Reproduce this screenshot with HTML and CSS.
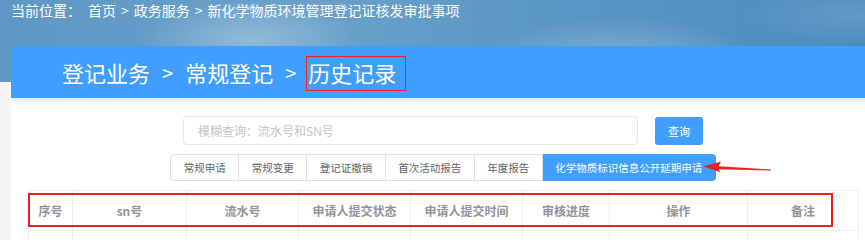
FILE: index.html
```html
<!DOCTYPE html>
<html lang="zh-CN">
<head>
<meta charset="utf-8">
<title>历史记录</title>
<link rel="stylesheet" href="styles.css">
</head>
<body>
<div class="loc"><span class="loc-label">当前位置：</span><span>首页</span><span class="gt">&gt;</span><span>政务服务</span><span class="gt">&gt;</span><span>新化学物质环境管理登记证核发审批事项</span></div>
<div class="card">
  <div class="card-head">
    <span>登记业务</span><span class="sep">&gt;</span><span>常规登记</span><span class="sep">&gt;</span><span class="mark">历史记录</span>
  </div>
  <div class="search">
    <div class="input">模糊查询：流水号和SN号</div>
    <button class="btn">查询</button>
  </div>
  <div class="tabs">
    <div class="tab">常规申请</div>
    <div class="tab">常规变更</div>
    <div class="tab">登记证撤销</div>
    <div class="tab">首次活动报告</div>
    <div class="tab">年度报告</div>
    <div class="tab active">化学物质标识信息公开延期申请</div>
  </div>
  <svg class="arrow" width="76" height="18" viewBox="0 0 76 18">
    <polygon points="3,8.5 21,3.6 18.5,8.2 71,11.6 71,12.6 18.5,11.2 20.5,14.2" fill="#f21c1c"/>
  </svg>
  <div class="table-wrap">
    <table class="grid">
      <colgroup>
        <col style="width:44px"><col style="width:114px"><col style="width:112px"><col style="width:112px">
        <col style="width:112px"><col style="width:87px"><col style="width:138px"><col style="width:111px">
      </colgroup>
      <tr class="head">
        <th>序号</th><th>sn号</th><th>流水号</th><th>申请人提交状态</th><th>申请人提交时间</th><th>审核进度</th><th>操作</th><th>备注</th>
      </tr>
      <tr class="row">
        <td></td><td></td><td></td><td></td><td></td><td></td><td></td><td></td>
      </tr>
    </table>
    <div class="hl"></div>
  </div>
</div>
</body>
</html>
```
FILE: styles.css
```css
html, body {
  margin: 0;
  padding: 0;
  overflow: hidden;
}
body {
  width: 865px;
  height: 240px;
  font-family: "Noto Sans CJK SC", "Noto Sans", sans-serif;
  background-color: #f5f5f5;
  background-image:
    radial-gradient(ellipse 110px 40px at 250px 40px, rgba(255,255,255,0.28), rgba(255,255,255,0) 100%),
    radial-gradient(ellipse 140px 45px at 620px 62px, rgba(255,255,255,0.25), rgba(255,255,255,0) 100%),
    radial-gradient(ellipse 120px 30px at 860px 15px, rgba(255,255,255,0.12), rgba(255,255,255,0) 100%),
    linear-gradient(90deg, #5e97c5 0%, #6aa1cb 35%, #5c98c6 60%, #4d8cbf 100%);
  background-size: 100% 82px, 100% 82px, 100% 82px, 100% 82px;
  background-repeat: no-repeat;
}
.loc {
  height: 46px;
  padding-left: 11px;
  color: #fff;
  font-size: 14px;
  line-height: 21px;
  white-space: nowrap;
  box-sizing: border-box;
}
.loc-label {
  margin-right: 7px;
}
.loc .gt {
  margin: 0 5px;
}
.card {
  position: relative;
  margin-left: 11px;
  width: 864px;
  height: 194px;
  overflow: hidden;
  background: #fff;
  padding: 0 17px;
  box-sizing: border-box;
}
.card-head {
  margin: 0 -17px;
  height: 52px;
  background: #409eff;
  display: flex;
  align-items: center;
  padding-left: 51px;
  color: #fff;
  font-size: 22px;
  white-space: nowrap;
  box-shadow: 0 3px 8px rgba(0,0,0,0.12);
}
.card-head .sep {
  margin: 0 12px 0 12px;
  font-size: 20px;
}
.card-head .mark {
  border: 1px solid #ff1a1a;
  height: 33px;
  line-height: 31px;
  padding: 0 9px 0 1px;
  margin-left: -2px;
  margin-top: 3px;
}
.search {
  display: flex;
  justify-content: center;
  align-items: center;
  gap: 17px;
  margin-top: 18px;
  height: 29px;
}
.input {
  width: 455px;
  height: 29px;
  box-sizing: border-box;
  border: 1px solid #e4e7ed;
  border-radius: 4px;
  padding-left: 14px;
  color: #c0c4cc;
  font-size: 12px;
  line-height: 27px;
}
.btn {
  width: 48px;
  height: 28px;
  border: none;
  border-radius: 3px;
  background: #409eff;
  color: #fff;
  font-family: inherit;
  font-size: 11px;
  padding: 0;
}
.tabs {
  display: flex;
  justify-content: center;
  margin-top: 9px;
  height: 27px;
}
.tab {
  height: 27px;
  box-sizing: border-box;
  border: 1px solid #dcdfe6;
  border-left: none;
  padding: 0 12.5px;
  font-size: 10.5px;
  line-height: 25px;
  color: #606266;
  white-space: nowrap;
}
.tab:first-child {
  border-left: 1px solid #dcdfe6;
  border-radius: 4px 0 0 4px;
}
.tab.active {
  background: #409eff;
  border-color: #409eff;
  color: #fff;
  border-radius: 0 4px 4px 0;
}
.arrow {
  position: absolute;
  left: 689px;
  top: 112px;
}
.table-wrap {
  position: relative;
  margin-top: 9px;
  width: 830px;
}
.grid {
  border-collapse: collapse;
  table-layout: fixed;
  width: 830px;
}
.grid th, .grid td {
  border: 1px solid #ebeef5;
  padding: 0;
}
.grid .head th {
  height: 39px;
  color: #909399;
  font-size: 12px;
  font-weight: bold;
  text-align: center;
}
.grid .row td {
  height: 39px;
}
.hl {
  position: absolute;
  left: 0;
  top: 3px;
  width: 805px;
  height: 34px;
  box-sizing: border-box;
  border: 2px solid #f01e1e;
}
```
